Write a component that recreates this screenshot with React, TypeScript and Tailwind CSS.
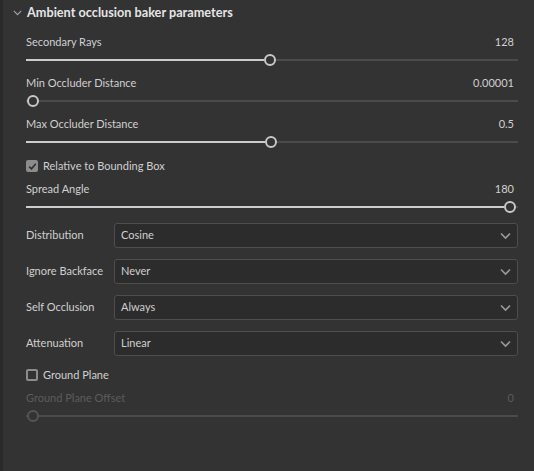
import React from "react";

const font = { fontFamily: 'Lato, "Liberation Sans", sans-serif' };

type SliderProps = {
  label: string;
  value: string;
  pos: number;
  disabled?: boolean;
};

const Slider: React.FC<SliderProps> = ({ label, value, pos, disabled }) => {
  // thumb center travels from 7px to width-8px of the track
  const left = `calc(7px + ${pos} * (100% - 15px))`;
  return (
    <div className="flex h-[41px] flex-col">
      <div
        className={`flex h-4 items-center justify-between pr-1 text-[11px] whitespace-nowrap ${
          disabled ? "text-[#5c5c5c]" : "text-[#d0d0d0]"
        }`}
      >
        <span>{label}</span>
        <span>{value}</span>
      </div>
      <div className="relative h-[18px]">
        <div className="absolute top-[9px] right-0 left-0 h-[2px] bg-[#4b4b4b]" />
        {!disabled && pos > 0 && (
          <div
            className="absolute top-[9px] left-0 h-[2px] bg-[#cdcdcd]"
            style={{ width: `calc(${left} - 6px)` }}
          />
        )}
        <div
          className={`absolute top-[4px] h-[12px] w-[12px] -translate-x-1/2 rounded-full border-2 bg-[#333333] ${
            disabled ? "border-[#555555]" : "border-[#c8c8c8]"
          }`}
          style={{ left }}
        />
      </div>
    </div>
  );
};

const Check: React.FC<{ label: string; checked?: boolean }> = ({
  label,
  checked,
}) => (
  <div className="flex h-[18px] items-center gap-[5px] text-[11px] text-[#d0d0d0]">
    {checked ? (
      <div className="flex h-[12px] w-[12px] items-center justify-center rounded-[2px] bg-[#8c8c8c]">
        <svg width="9" height="9" viewBox="0 0 9 9">
          <path
            d="M1.2 4.6 L3.5 6.8 L7.8 1.8"
            fill="none"
            stroke="#2e2e2e"
            strokeWidth="1.6"
          />
        </svg>
      </div>
    ) : (
      <div className="h-[12px] w-[12px] rounded-[2px] border-2 border-[#8c8c8c]" />
    )}
    <span>{label}</span>
  </div>
);

const Select: React.FC<{ label: string; value: string }> = ({
  label,
  value,
}) => (
  <div className="flex h-[25px] items-center text-[11px] text-[#d0d0d0]">
    <div className="w-[88px] shrink-0 whitespace-nowrap">{label}</div>
    <div className="flex h-full flex-1 items-center justify-between rounded-[3px] border border-[#4e4e4e] bg-[#2c2c2c] pr-[6px] pl-[6px]">
      <span>{value}</span>
      <svg width="11" height="8" viewBox="0 0 11 8">
        <path
          d="M1 1.5 L5.5 6 L10 1.5"
          fill="none"
          stroke="#9a9a9a"
          strokeWidth="1.6"
        />
      </svg>
    </div>
  </div>
);

export default function App() {
  return (
    <div
      className="flex h-[471px] w-[534px] overflow-hidden bg-[#333333]"
      style={font}
    >
      <div className="w-[3px] shrink-0 bg-[#2a2a2a]" />
      <div className="flex flex-1 flex-col">
        <div className="flex h-[25px] items-center gap-[5px] pl-[10px]">
          <svg width="9" height="6" viewBox="0 0 9 6">
            <path
              d="M0.8 0.8 L4.5 4.6 L8.2 0.8"
              fill="none"
              stroke="#a0a0a0"
              strokeWidth="1.2"
            />
          </svg>
          <span className="text-[12.7px] font-bold text-[#e6e6e6]">
            Ambient occlusion baker parameters
          </span>
        </div>
        <div className="flex flex-col pt-[9px] pr-[16px] pl-[23px]">
          <Slider label="Secondary Rays" value="128" pos={0.497} />
          <Slider label="Min Occluder Distance" value="0.00001" pos={0} />
          <Slider label="Max Occluder Distance" value="0.5" pos={0.499} />
          <Check label="Relative to Bounding Box" checked />
          <div className="mt-[6px]">
            <Slider label="Spread Angle" value="180" pos={1} />
          </div>
          <div className="mt-[1px] flex flex-col gap-[11px]">
            <Select label="Distribution" value="Cosine" />
            <Select label="Ignore Backface" value="Never" />
            <Select label="Self Occlusion" value="Always" />
            <Select label="Attenuation" value="Linear" />
          </div>
          <div className="mt-[10px]">
            <Check label="Ground Plane" />
          </div>
          <div className="mt-[6px]">
            <Slider label="Ground Plane Offset" value="0" pos={0} disabled />
          </div>
        </div>
      </div>
    </div>
  );
}
